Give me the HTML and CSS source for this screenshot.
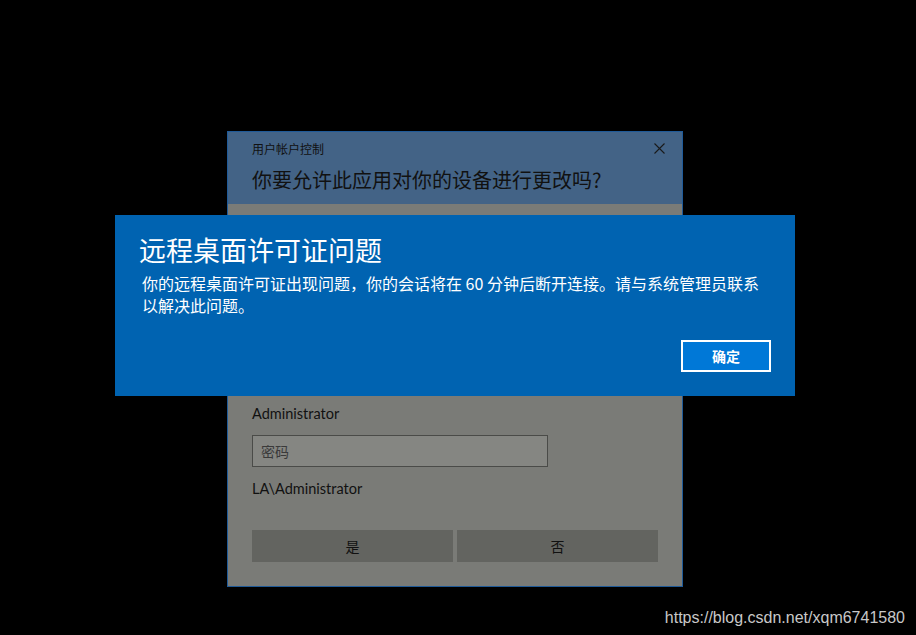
FILE: index.html
```html
<!DOCTYPE html>
<html lang="zh-CN">
<head>
<meta charset="utf-8">
<title>远程桌面许可证问题</title>
<link rel="stylesheet" href="styles.css">
</head>
<body>
<div class="screen">
  <div class="uac">
    <div class="uac-head">
      <div class="uac-bar">
        <span class="uac-caption">用户帐户控制</span>
        <svg class="uac-close" width="11" height="11" viewBox="0 0 11 11"><path d="M0.5 0.5L10.5 10.5M10.5 0.5L0.5 10.5" stroke="#1a1a1a" stroke-width="1.1" fill="none"/></svg>
      </div>
      <div class="uac-question">你要允许此应用对你的设备进行更改吗?</div>
    </div>
    <div class="uac-body">
      <div class="uac-user">Administrator</div>
      <div class="uac-input">密码</div>
      <div class="uac-domain">LA\Administrator</div>
      <div class="uac-buttons">
        <div class="uac-btn">是</div>
        <div class="uac-btn">否</div>
      </div>
    </div>
  </div>

  <div class="banner">
    <div class="banner-title">远程桌面许可证问题</div>
    <div class="banner-text">你的远程桌面许可证出现问题，你的会话将在 60 分钟后断开连接。请与系统管理员联系<br>以解决此问题。</div>
    <div class="banner-actions">
      <div class="banner-btn">确定</div>
    </div>
  </div>

  <div class="watermark">https://blog.csdn.net/xqm6741580</div>
</div>
</body>
</html>
```

FILE: styles.css
```css
html, body {
  margin: 0;
  padding: 0;
  background: #000;
}
body {
  font-family: "Noto Sans", "Noto Sans CJK SC", sans-serif;
}
.screen {
  position: relative;
  width: 916px;
  height: 635px;
  background: #000;
  overflow: hidden;
}

/* UAC window (dimmed) */
.uac {
  position: absolute;
  left: 227px;
  top: 131px;
  width: 454px;
  height: 454px;
  border: 1px solid #1f5a98;
  background: #7a7b77;
  display: flex;
  flex-direction: column;
}
.uac-head {
  background: #436386;
  height: 72px;
  padding: 0 0 0 24px;
  box-sizing: border-box;
}
.uac-bar {
  display: flex;
  align-items: center;
  justify-content: space-between;
  height: 31px;
  padding-right: 17px;
  padding-top: 2px;
  box-sizing: border-box;
}
.uac-caption {
  font-family: "Noto Sans CJK SC", sans-serif;
  font-size: 12px;
  color: #111;
}
.uac-close {
  display: block;
}
.uac-question {
  font-family: "Noto Sans CJK SC", sans-serif;
  font-size: 20px;
  color: #111;
  line-height: 28px;
  margin-top: 3px;
}
.uac-body {
  flex: 1;
  padding: 200px 24px 0 24px;
  display: flex;
  flex-direction: column;
}
.uac-user,
.uac-domain {
  font-family: "Lato", "Noto Sans", sans-serif;
  font-size: 14.5px;
  color: #111;
  line-height: 20px;
}
.uac-input {
  margin-top: 11px;
  width: 296px;
  height: 32px;
  box-sizing: border-box;
  border: 1px solid #4a4b48;
  background: #858682;
  padding-left: 8px;
  font-family: "Noto Sans CJK SC", sans-serif;
  font-size: 14px;
  color: #3a3a3a;
  line-height: 30px;
}
.uac-domain {
  margin-top: 12px;
}
.uac-buttons {
  margin-top: 31px;
  display: flex;
  gap: 4px;
}
.uac-btn {
  flex: 1;
  height: 32px;
  background: #636460;
  display: flex;
  align-items: center;
  justify-content: center;
  font-family: "Noto Sans CJK SC", sans-serif;
  font-size: 14px;
  color: #111;
}

/* Blue banner */
.banner {
  position: absolute;
  left: 115px;
  top: 215px;
  width: 680px;
  height: 181px;
  background: #0063b1;
  color: #fff;
  box-sizing: border-box;
  padding: 18px 24px 24px 24px;
  display: flex;
  flex-direction: column;
  font-family: "Noto Sans CJK SC", sans-serif;
}
.banner-title {
  font-size: 27px;
  line-height: 34px;
  font-weight: 400;
}
.banner-text {
  font-size: 16px;
  line-height: 22px;
  margin-top: 5px;
  padding-left: 3px;
}
.banner-actions {
  margin-top: auto;
  display: flex;
  justify-content: flex-end;
}
.banner-btn {
  width: 90px;
  height: 32px;
  box-sizing: border-box;
  border: 2px solid #fff;
  background: #0078d7;
  display: flex;
  align-items: center;
  justify-content: center;
  font-size: 14px;
  font-weight: 700;
  color: #fff;
}

.watermark {
  position: absolute;
  right: 11px;
  bottom: 8px;
  font-family: "Liberation Sans", Arial, sans-serif;
  font-size: 16px;
  color: #c8c8c8;
}
```
